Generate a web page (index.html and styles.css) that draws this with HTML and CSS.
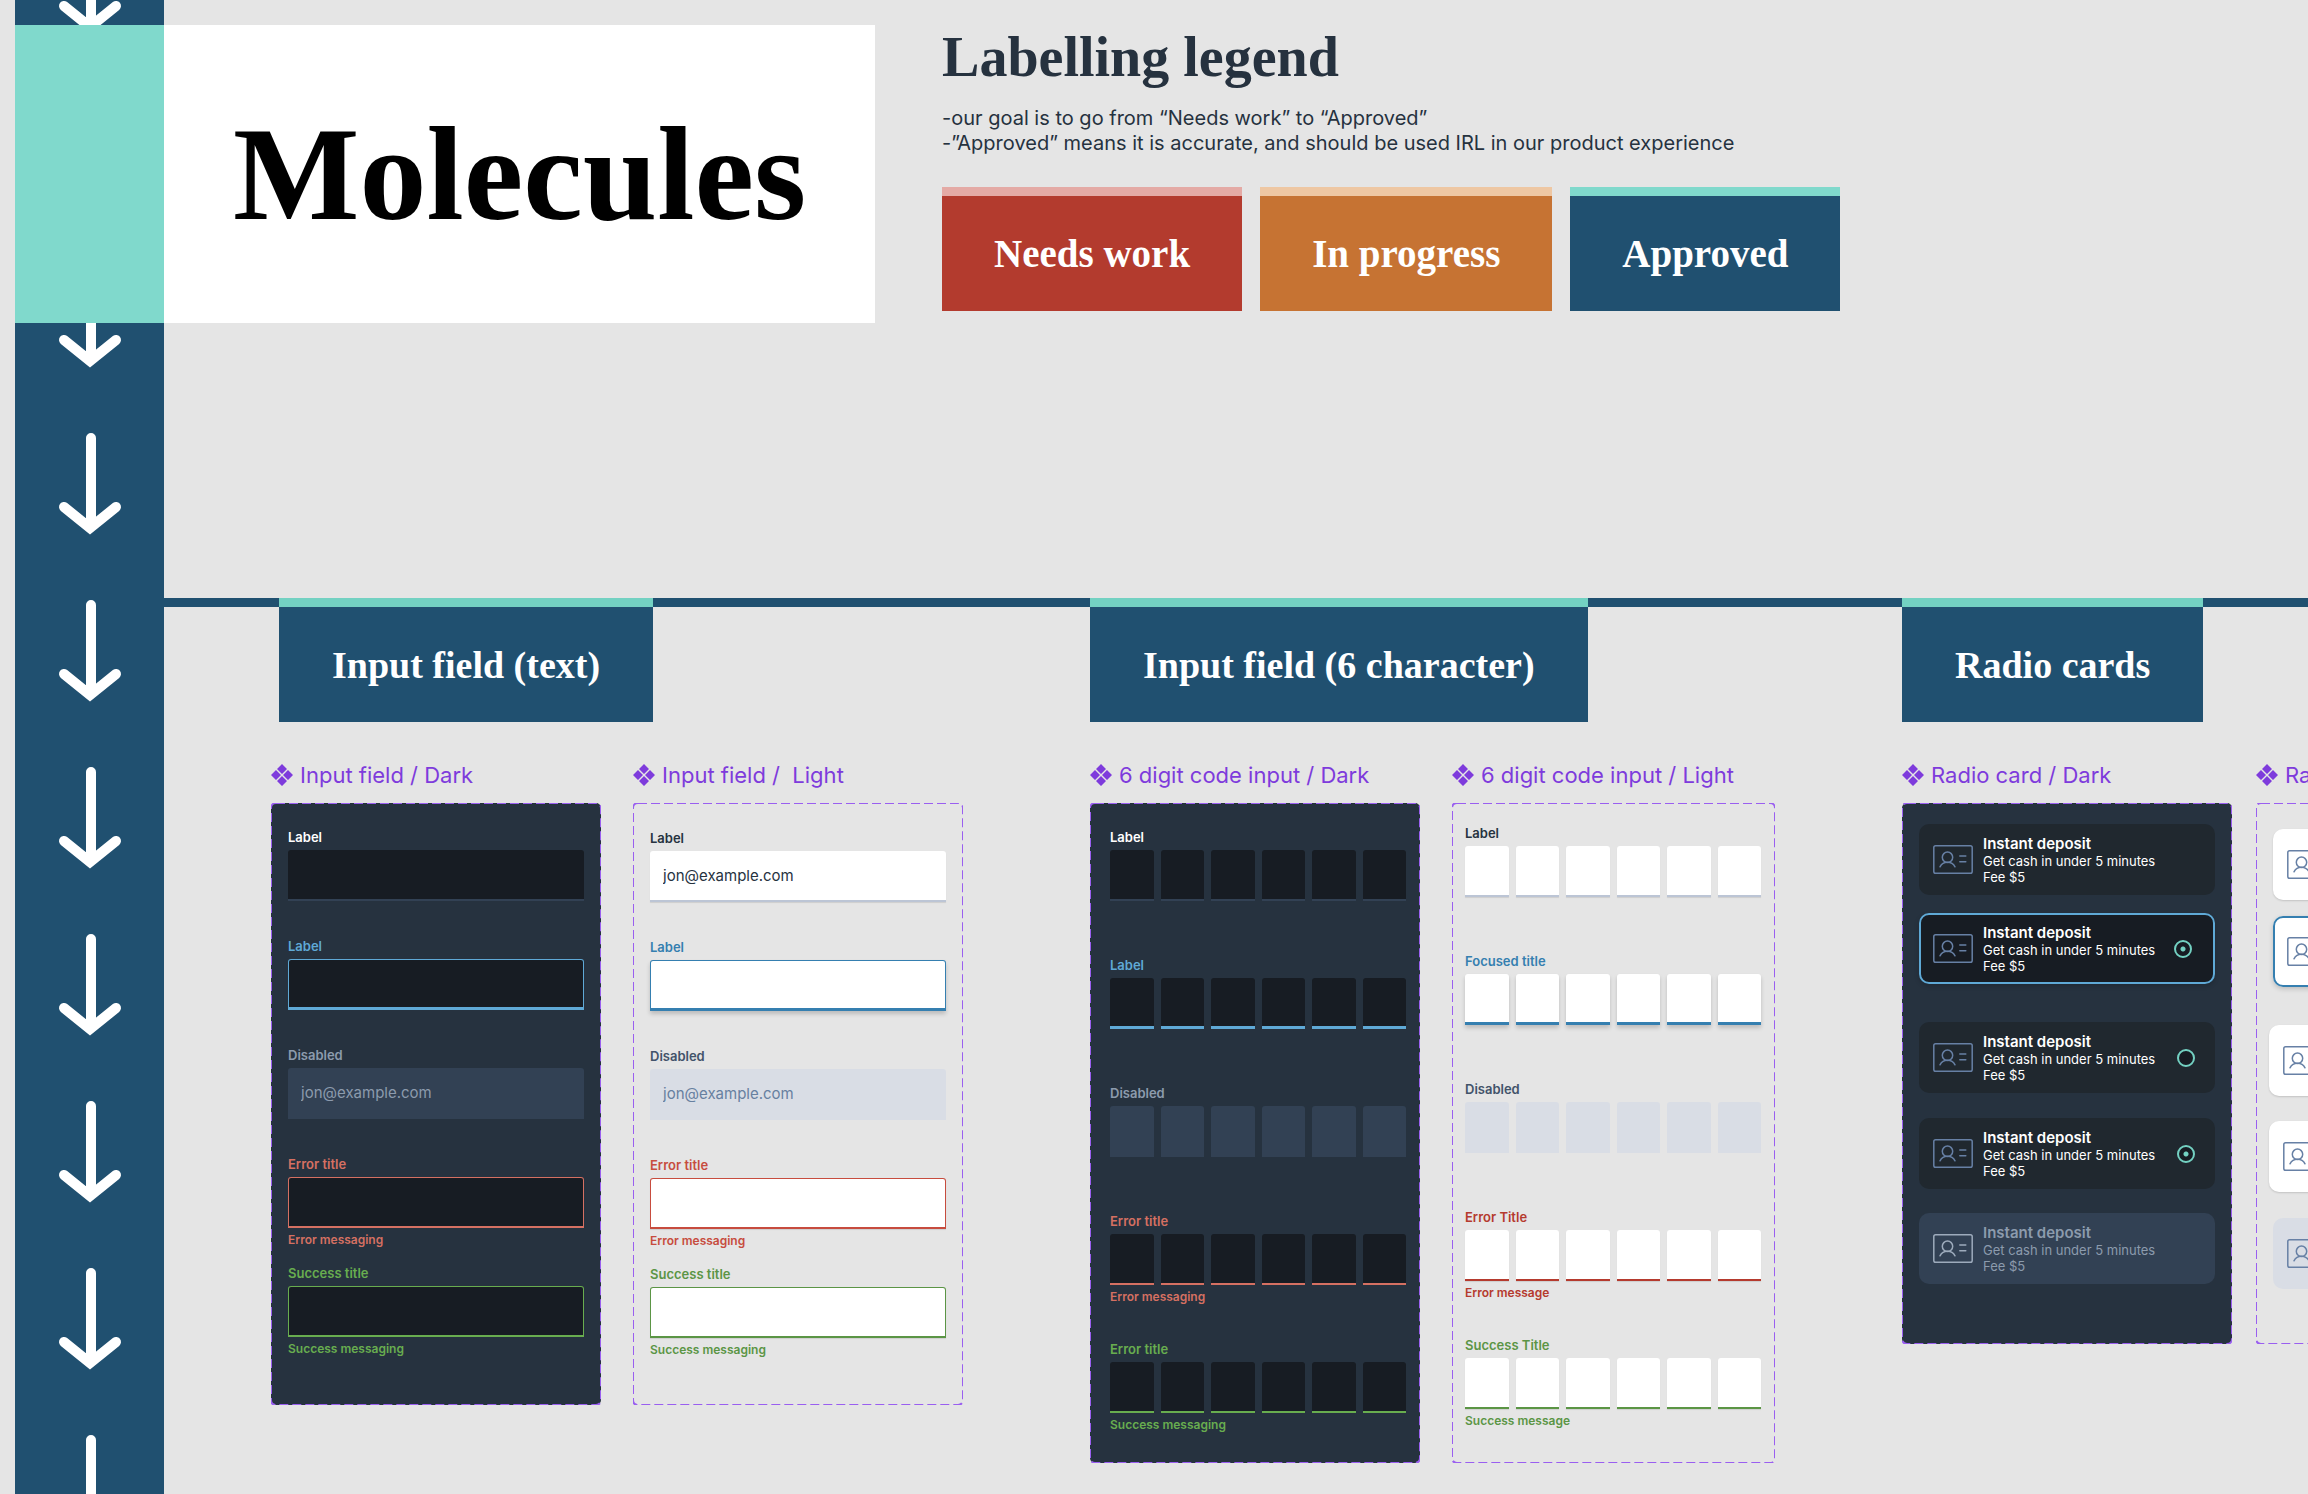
FILE: index.html
```html
<!DOCTYPE html>
<html lang="en">
<head>
<meta charset="utf-8">
<meta name="viewport" content="width=device-width, initial-scale=1">
<title>Molecules</title>
<link rel="stylesheet" href="styles.css">
</head>
<body>
<svg class="sprite" aria-hidden="true">
  <symbol id="component" viewBox="0 0 22 22">
    <path fill="currentColor" d="M11 0l5 5-5 5-5-5zM11 12l5 5-5 5-5-5zM5 6l5 5-5 5-5-5zM17 6l5 5-5 5-5-5z"/>
  </symbol>
  <symbol id="id-card" viewBox="0 0 40 29">
    <g fill="none" stroke="currentColor" stroke-width="1.5" stroke-linecap="round">
      <rect x=".8" y=".8" width="38.4" height="27.4" rx="1.8"/>
      <circle cx="14.5" cy="12.3" r="5.2"/>
      <path d="M7 21.8c1.4-2.800 3.600-4.600 7.500-4.600s6.100 1.800 7.500 4.600M26.800 11h6M26.800 16.800h6"/>
    </g>
  </symbol>
</svg>

<div class="board">
  <svg class="rail" aria-hidden="true">
    <defs>
      <pattern id="arrows" x="0" y="-68" width="149" height="167" patternUnits="userSpaceOnUse">
        <path d="M76 5V90M49 74L75 95L101 74" fill="none" stroke="#fff" stroke-width="10" stroke-linecap="round"/>
      </pattern>
    </defs>
    <rect width="100%" height="100%" fill="url(#arrows)"/>
  </svg>

  <header class="top">
    <div class="banner"><h1 class="banner-title">Molecules</h1></div>
    <section class="legend">
      <h2 class="legend-title">Labelling legend</h2>
      <p class="legend-text">-our goal is to go from “Needs work” to “Approved”<br>-”Approved” means it is accurate, and should be used IRL in our product experience</p>
      <div class="chips">
        <span class="tab tab-red">Needs work</span>
        <span class="tab tab-orange">In progress</span>
        <span class="tab tab-approved">Approved</span>
      </div>
    </section>
  </header>

  <main class="sections">
    <section class="section">
      <h2 class="tab tab-inset">Input field (text)</h2>
      <div class="sets">
        <article class="set">
          <h3 class="set-title"><svg class="set-icon"><use href="#component"/></svg>Input field / Dark</h3>
          <div class="panel dark">
            <svg class="dashes" aria-hidden="true"><rect width="100%" height="100%" rx="5"/></svg>
            <div class="field"><label for="td1">Label</label><input class="box" id="td1" type="text"></div>
            <div class="field focused"><label for="td2">Label</label><input class="box" id="td2" type="text"></div>
            <div class="field disabled"><label for="td3">Disabled</label><input class="box" id="td3" type="text" value="jon@example.com" disabled></div>
            <div class="field error"><label for="td4">Error title</label><input class="box" id="td4" type="text"><p class="message">Error messaging</p></div>
            <div class="field success"><label for="td5">Success title</label><input class="box" id="td5" type="text"><p class="message">Success messaging</p></div>
          </div>
        </article>
        <article class="set">
          <h3 class="set-title"><svg class="set-icon"><use href="#component"/></svg>Input field / &nbsp;Light</h3>
          <div class="panel light">
            <svg class="dashes" aria-hidden="true"><rect width="100%" height="100%" rx="5"/></svg>
            <div class="field"><label for="tl1">Label</label><input class="box" id="tl1" type="text" value="jon@example.com"></div>
            <div class="field focused"><label for="tl2">Label</label><input class="box" id="tl2" type="text"></div>
            <div class="field disabled"><label for="tl3">Disabled</label><input class="box" id="tl3" type="text" value="jon@example.com" disabled></div>
            <div class="field error"><label for="tl4">Error title</label><input class="box" id="tl4" type="text"><p class="message">Error messaging</p></div>
            <div class="field success"><label for="tl5">Success title</label><input class="box" id="tl5" type="text"><p class="message">Success messaging</p></div>
          </div>
        </article>
      </div>
    </section>

    <section class="section">
      <h2 class="tab">Input field (6 character)</h2>
      <div class="sets">
        <article class="set">
          <h3 class="set-title"><svg class="set-icon"><use href="#component"/></svg>6 digit code input / Dark</h3>
          <div class="panel dark codes">
            <svg class="dashes" aria-hidden="true"><rect width="100%" height="100%" rx="5"/></svg>
            <div class="field"><label for="cd1">Label</label><div class="digits"><input class="box" id="cd1" type="text" maxlength="1"><input class="box" type="text" maxlength="1" aria-label="Digit 2"><input class="box" type="text" maxlength="1" aria-label="Digit 3"><input class="box" type="text" maxlength="1" aria-label="Digit 4"><input class="box" type="text" maxlength="1" aria-label="Digit 5"><input class="box" type="text" maxlength="1" aria-label="Digit 6"></div></div>
            <div class="field focused"><label for="cd2">Label</label><div class="digits"><input class="box" id="cd2" type="text" maxlength="1"><input class="box" type="text" maxlength="1" aria-label="Digit 2"><input class="box" type="text" maxlength="1" aria-label="Digit 3"><input class="box" type="text" maxlength="1" aria-label="Digit 4"><input class="box" type="text" maxlength="1" aria-label="Digit 5"><input class="box" type="text" maxlength="1" aria-label="Digit 6"></div></div>
            <div class="field disabled"><label for="cd3">Disabled</label><div class="digits"><input class="box" id="cd3" type="text" disabled><input class="box" type="text" aria-label="Digit 2" disabled><input class="box" type="text" aria-label="Digit 3" disabled><input class="box" type="text" aria-label="Digit 4" disabled><input class="box" type="text" aria-label="Digit 5" disabled><input class="box" type="text" aria-label="Digit 6" disabled></div></div>
            <div class="field error"><label for="cd4">Error title</label><div class="digits"><input class="box" id="cd4" type="text" maxlength="1"><input class="box" type="text" maxlength="1" aria-label="Digit 2"><input class="box" type="text" maxlength="1" aria-label="Digit 3"><input class="box" type="text" maxlength="1" aria-label="Digit 4"><input class="box" type="text" maxlength="1" aria-label="Digit 5"><input class="box" type="text" maxlength="1" aria-label="Digit 6"></div><p class="message">Error messaging</p></div>
            <div class="field success"><label for="cd5">Error title</label><div class="digits"><input class="box" id="cd5" type="text" maxlength="1"><input class="box" type="text" maxlength="1" aria-label="Digit 2"><input class="box" type="text" maxlength="1" aria-label="Digit 3"><input class="box" type="text" maxlength="1" aria-label="Digit 4"><input class="box" type="text" maxlength="1" aria-label="Digit 5"><input class="box" type="text" maxlength="1" aria-label="Digit 6"></div><p class="message">Success messaging</p></div>
          </div>
        </article>
        <article class="set">
          <h3 class="set-title"><svg class="set-icon"><use href="#component"/></svg>6 digit code input / Light</h3>
          <div class="panel light codes">
            <svg class="dashes" aria-hidden="true"><rect width="100%" height="100%" rx="5"/></svg>
            <div class="field"><label for="cl1">Label</label><div class="digits"><input class="box" id="cl1" type="text" maxlength="1"><input class="box" type="text" maxlength="1" aria-label="Digit 2"><input class="box" type="text" maxlength="1" aria-label="Digit 3"><input class="box" type="text" maxlength="1" aria-label="Digit 4"><input class="box" type="text" maxlength="1" aria-label="Digit 5"><input class="box" type="text" maxlength="1" aria-label="Digit 6"></div></div>
            <div class="field focused"><label for="cl2">Focused title</label><div class="digits"><input class="box" id="cl2" type="text" maxlength="1"><input class="box" type="text" maxlength="1" aria-label="Digit 2"><input class="box" type="text" maxlength="1" aria-label="Digit 3"><input class="box" type="text" maxlength="1" aria-label="Digit 4"><input class="box" type="text" maxlength="1" aria-label="Digit 5"><input class="box" type="text" maxlength="1" aria-label="Digit 6"></div></div>
            <div class="field disabled"><label for="cl3">Disabled</label><div class="digits"><input class="box" id="cl3" type="text" disabled><input class="box" type="text" aria-label="Digit 2" disabled><input class="box" type="text" aria-label="Digit 3" disabled><input class="box" type="text" aria-label="Digit 4" disabled><input class="box" type="text" aria-label="Digit 5" disabled><input class="box" type="text" aria-label="Digit 6" disabled></div></div>
            <div class="field error"><label for="cl4">Error Title</label><div class="digits"><input class="box" id="cl4" type="text" maxlength="1"><input class="box" type="text" maxlength="1" aria-label="Digit 2"><input class="box" type="text" maxlength="1" aria-label="Digit 3"><input class="box" type="text" maxlength="1" aria-label="Digit 4"><input class="box" type="text" maxlength="1" aria-label="Digit 5"><input class="box" type="text" maxlength="1" aria-label="Digit 6"></div><p class="message">Error message</p></div>
            <div class="field success"><label for="cl5">Success Title</label><div class="digits"><input class="box" id="cl5" type="text" maxlength="1"><input class="box" type="text" maxlength="1" aria-label="Digit 2"><input class="box" type="text" maxlength="1" aria-label="Digit 3"><input class="box" type="text" maxlength="1" aria-label="Digit 4"><input class="box" type="text" maxlength="1" aria-label="Digit 5"><input class="box" type="text" maxlength="1" aria-label="Digit 6"></div><p class="message">Success message</p></div>
          </div>
        </article>
      </div>
    </section>

    <section class="section">
      <h2 class="tab">Radio cards</h2>
      <div class="sets sets-tight">
        <article class="set">
          <h3 class="set-title"><svg class="set-icon"><use href="#component"/></svg>Radio card / Dark</h3>
          <div class="panel dark cards">
            <svg class="dashes" aria-hidden="true"><rect width="100%" height="100%" rx="5"/></svg>
            <div class="group">
              <div class="card"><svg class="card-icon"><use href="#id-card"/></svg><p class="card-text"><b>Instant deposit</b>Get cash in under 5 minutes<br>Fee $5</p></div>
              <label class="card card-focused"><svg class="card-icon"><use href="#id-card"/></svg><span class="card-text"><b>Instant deposit</b>Get cash in under 5 minutes<br>Fee $5</span><input class="radio" type="radio" name="rd1" checked></label>
            </div>
            <div class="group group-options">
              <label class="card"><svg class="card-icon"><use href="#id-card"/></svg><span class="card-text"><b>Instant deposit</b>Get cash in under 5 minutes<br>Fee $5</span><input class="radio" type="radio" name="rd2"></label>
              <label class="card"><svg class="card-icon"><use href="#id-card"/></svg><span class="card-text"><b>Instant deposit</b>Get cash in under 5 minutes<br>Fee $5</span><input class="radio" type="radio" name="rd2" checked></label>
            </div>
            <div class="group group-disabled">
              <div class="card card-disabled"><svg class="card-icon"><use href="#id-card"/></svg><p class="card-text"><b>Instant deposit</b>Get cash in under 5 minutes<br>Fee $5</p></div>
            </div>
          </div>
        </article>
        <article class="set">
          <h3 class="set-title"><svg class="set-icon"><use href="#component"/></svg>Radio card / Light</h3>
          <div class="panel light cards">
            <svg class="dashes" aria-hidden="true"><rect width="100%" height="100%" rx="5"/></svg>
            <div class="group">
              <div class="card"><svg class="card-icon"><use href="#id-card"/></svg><p class="card-text"><b>Instant deposit</b>Get cash in under 5 minutes<br>Fee $5</p></div>
              <label class="card card-focused"><svg class="card-icon"><use href="#id-card"/></svg><span class="card-text"><b>Instant deposit</b>Get cash in under 5 minutes<br>Fee $5</span><input class="radio" type="radio" name="rl1" checked></label>
            </div>
            <div class="group group-options">
              <label class="card"><svg class="card-icon"><use href="#id-card"/></svg><span class="card-text"><b>Instant deposit</b>Get cash in under 5 minutes<br>Fee $5</span><input class="radio" type="radio" name="rl2"></label>
              <label class="card"><svg class="card-icon"><use href="#id-card"/></svg><span class="card-text"><b>Instant deposit</b>Get cash in under 5 minutes<br>Fee $5</span><input class="radio" type="radio" name="rl2" checked></label>
            </div>
            <div class="group group-disabled">
              <div class="card card-disabled"><svg class="card-icon"><use href="#id-card"/></svg><p class="card-text"><b>Instant deposit</b>Get cash in under 5 minutes<br>Fee $5</p></div>
            </div>
          </div>
        </article>
      </div>
    </section>
  </main>
</div>
</body>
</html>
```

FILE: styles.css
```css
* { box-sizing: border-box; }

body {
  margin: 0;
  background: #e5e5e5;
  color: #26323f;
  font-family: Inter, "Liberation Sans", sans-serif;
}

h1, h2, h3, p { margin: 0; font-weight: inherit; }

.sprite { display: none; }

.board {
  display: grid;
  grid-template-columns: 149px minmax(0, 1fr);
  grid-template-rows: auto 1fr;
  row-gap: 275px;
  min-height: 100vh;
  padding-left: 15px;
  overflow: hidden;
}

.rail {
  grid-column: 1;
  grid-row: 1 / 3;
  width: 100%;
  height: 100%;
  background: #205070;
}

/* Header */
.top {
  grid-column: 1 / 3;
  grid-row: 1;
  display: flex;
  align-items: flex-start;
  gap: 67px;
  padding-top: 25px;
}

.banner {
  display: flex;
  align-items: center;
  height: 298px;
  padding: 0 69px;
  border-left: 149px solid #80d9cc;
  background: #fff;
}

.banner-title {
  color: #000;
  font: bold 134px/1 "Liberation Serif", serif;
}

.legend-title {
  font: bold 56px/64px "Liberation Serif", serif;
}

.legend-text {
  margin: 17px 0 31px;
  font-size: 20px;
  line-height: 25px;
}

.chips { display: flex; gap: 18px; }

.tab {
  display: flex;
  align-items: center;
  align-self: flex-start;
  height: 124px;
  padding: 0 53px;
  border-top: 9px solid #73d1c2;
  background: #205070;
  color: #fff;
  font: bold 38px/48px "Liberation Serif", serif;
  white-space: nowrap;
}

.chips .tab { padding: 0 52px; font-size: 39px; }

.tab-inset { margin-left: 8px; }
.tab-red { background: #b33b2e; border-color: #e4aaa5; }
.tab-orange { background: #c67333; border-color: #eec7a3; }
.tab-approved { border-color: #80d9cc; }

/* Sections hang from the horizontal rule */
.sections {
  grid-column: 2;
  grid-row: 2;
  display: flex;
  align-items: flex-start;
  gap: 127px;
  padding: 0 0 31px 107px;
  background: linear-gradient(#205070, #205070) 0 0 / 100% 9px no-repeat;
}

.section {
  display: flex;
  flex: none;
  flex-direction: column;
  gap: 41px;
}

.sets { display: flex; align-items: flex-start; gap: 32px; }
.sets-tight { gap: 24px; }

.set-title {
  display: flex;
  align-items: center;
  gap: 7px;
  margin-bottom: 16px;
  color: #7e3bdc;
  font-size: 22px;
  line-height: 24px;
}

.set-icon { width: 22px; height: 22px; }

.panel {
  position: relative;
  display: flex;
  flex-direction: column;
  gap: 16px;
  padding: 25px 17px 48px;
  border-radius: 5px;
}

.dashes {
  position: absolute;
  inset: 0;
  width: 100%;
  height: 100%;
  pointer-events: none;
}

.dashes rect {
  fill: none;
  stroke: #9a5ff0;
  stroke-width: 2;
  stroke-dasharray: 9 4;
}

.dark {
  --label: #fff;
  --box: #171c23;
  --edge: #324154;
  --focus: #5fa9d6;
  --error: #d57062;
  --success: #68ad4f;
  --muted: #8c9bad;
  --muted-box: #324154;
  --muted-text: #8c9bad;
  --card: #20282f;
  --card-focus: #171c23;
  --card-shadow: none;
  --teal: #73d1c2;
  background: #26323f;
}

.light {
  --label: #26323f;
  --box: #fff;
  --edge: #bcc5d5;
  --focus: #357fb0;
  --error: #c74c3e;
  --success: #5b9545;
  --muted: #42536a;
  --muted-box: #d9dde5;
  --muted-text: #6780a0;
  --card: #fff;
  --card-focus: #fff;
  --card-shadow: 0 1px 2px rgb(0 0 0 / 15%);
  --teal: #357fb0;
  padding-top: 26px;
  padding-bottom: 47px;
}

/* Fields */
.field {
  --accent: var(--label);
  display: flex;
  flex-direction: column;
  gap: 4px;
  width: 296px;
  min-height: 93px;
}

.field label {
  color: var(--accent);
  font-size: 13px;
  font-weight: 600;
  line-height: 18px;
}

.focused { --accent: var(--focus); }
.disabled { --accent: var(--muted); }
.error { --accent: var(--error); }
.success { --accent: var(--success); }

.message {
  color: var(--accent);
  font-size: 12px;
  font-weight: 600;
  line-height: 16px;
}

.box {
  width: 100%;
  min-width: 0;
  height: 51px;
  padding: 0 13px;
  border: 0 solid var(--accent);
  border-bottom: 2px solid var(--edge);
  border-radius: 3px 3px 0 0;
  background: var(--box);
  color: var(--label);
  font: 15px/20px Inter, "Liberation Sans", sans-serif;
}

.focused .box,
.error .box,
.success .box { border-width: 1px 1px 2px; border-color: var(--accent); }
.focused .box { border-bottom-width: 3px; }

.disabled .box {
  border-color: var(--muted-box);
  background: var(--muted-box);
  color: var(--muted-text);
}

.light .box { box-shadow: 0 1px 1px rgb(0 0 0 / 10%); }
.light .focused .box { box-shadow: 0 3px 4px rgb(0 0 0 / 18%); }
.light .disabled .box { box-shadow: none; }

/* Six-character codes */
.codes { gap: 35px; padding: 25px 14px 30px 20px; }
.codes.light { --error: #b53a2e; padding: 21px 14px 34px 13px; }

.digits {
  display: grid;
  grid-template-columns: repeat(6, 1fr);
  gap: 7px;
}

.digits .box { padding: 0; text-align: center; }
.codes .field .box { border-width: 0 0 2px; }
.codes .focused .box { border-bottom-width: 3px; }

/* Radio cards */
.cards { gap: 38px; padding: 21px 17px 60px; }
.cards.light { padding: 26px 17px 55px; }

.group { display: flex; flex-direction: column; gap: 18px; width: 296px; }
.group-options { gap: 25px; }
.group-disabled { margin-top: -14px; }
.light .group { gap: 16px; }
.light .group-options { gap: 25px; margin-left: -4px; }
.light .group-disabled { margin-top: -12px; }

.card {
  display: flex;
  align-items: center;
  gap: 10px;
  height: 71px;
  padding: 0 20px 0 14px;
  border-radius: 10px;
  background: var(--card);
  box-shadow: var(--card-shadow);
  color: var(--label);
}

.card-focused {
  padding-right: 23px;
  background: var(--card-focus);
  box-shadow: inset 0 0 0 2px var(--focus), 0 2px 5px rgb(0 0 0 / 18%);
}

.card-disabled {
  background: var(--muted-box);
  box-shadow: none;
  color: var(--muted-text);
}

.card-icon { flex: none; width: 40px; height: 29px; color: #6780a5; }
.dark .card-disabled .card-icon { color: #9dabbc; }

.card-text { flex: 1; font-size: 13px; line-height: 16px; white-space: nowrap; }
.card-text b { display: block; font-size: 15px; font-weight: 600; line-height: 18px; }

.radio {
  flex: none;
  width: 18px;
  height: 18px;
  margin: 0;
  appearance: none;
  border: 2px solid var(--teal);
  border-radius: 50%;
  background: var(--card-focus);
}

.radio:checked {
  background: radial-gradient(circle, var(--teal) 0 2px, var(--card-focus) 3px);
}
```
